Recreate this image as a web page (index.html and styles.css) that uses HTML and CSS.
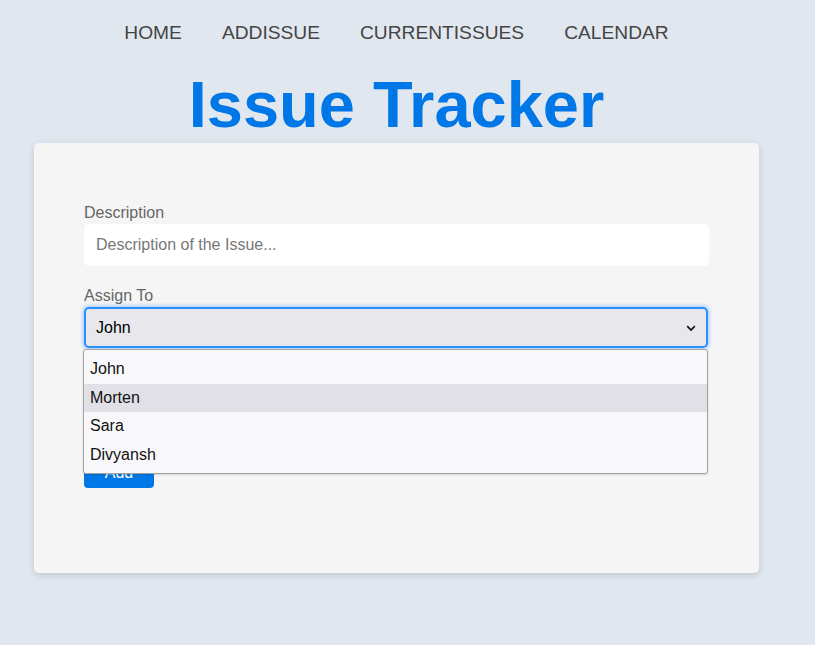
FILE: index.html
```html
<!DOCTYPE html>
<html lang="en">
<head>
<meta charset="utf-8">
<title>Issue Tracker</title>
<link rel="stylesheet" href="styles.css">
</head>
<body>
<div class="page">
  <nav class="nav">
    <a class="nav-link" href="#">HOME</a>
    <a class="nav-link" href="#">ADDISSUE</a>
    <a class="nav-link" href="#">CURRENTISSUES</a>
    <a class="nav-link" href="#">CALENDAR</a>
  </nav>
  <h1 class="title">Issue Tracker</h1>
  <div class="card">
    <form class="form">
      <label class="label">Description</label>
      <div class="input">Description of the Issue...</div>
      <label class="label label-assign">Assign To</label>
      <div class="select-wrap">
        <div class="select">
          <span>John</span>
          <svg class="chev" width="10" height="7" viewBox="0 0 10 7"><path d="M1.2 1.2 L5 5 L8.8 1.2" fill="none" stroke="#111" stroke-width="1.7"/></svg>
        </div>
        <ul class="dropdown">
          <li class="opt">John</li>
          <li class="opt opt-hover">Morten</li>
          <li class="opt">Sara</li>
          <li class="opt">Divyansh</li>
        </ul>
      </div>
      <button class="btn" type="button">Add</button>
    </form>
  </div>
</div>
</body>
</html>
```
FILE: styles.css
```css
html, body {
  margin: 0;
  padding: 0;
}
body {
  background: #e1e7ef;
  font-family: "Liberation Sans", Arial, sans-serif;
  width: 815px;
  height: 645px;
  overflow: hidden;
}
.page {
  width: 793px;
  display: flex;
  flex-direction: column;
  align-items: center;
}
.nav {
  display: flex;
  justify-content: center;
  padding: 22px 0 24px;
}
.nav-link {
  color: #444;
  text-decoration: none;
  font-size: 19.2px;
  line-height: 22px;
  padding: 0 20px;
}
.title {
  margin: 0;
  font-size: 65px;
  line-height: 74px;
  font-weight: bold;
  color: #0077e6;
}
.card {
  box-sizing: border-box;
  width: 725px;
  margin-top: 1px;
  background: #f5f5f5;
  border-radius: 5px;
  box-shadow: 0 2px 6px rgba(60, 70, 90, 0.2);
  padding: 61px 50px 85px;
}
.form {
  display: flex;
  flex-direction: column;
  align-items: flex-start;
}
.label {
  font-size: 16px;
  line-height: 18px;
  color: #666;
  margin-bottom: 2px;
}
.label-assign {
  margin-top: 21px;
  margin-bottom: 2px;
}
.input {
  box-sizing: border-box;
  width: 625px;
  height: 42px;
  background: #fff;
  border-radius: 5px;
  padding: 0 12px;
  display: flex;
  align-items: center;
  font-size: 16px;
  color: #777;
}
.select-wrap {
  position: relative;
  width: 625px;
}
.select {
  box-sizing: border-box;
  width: 624px;
  height: 41px;
  background: #e8e8ec;
  border: 2px solid #2b8fff;
  border-radius: 5px;
  box-shadow: 0 0 4px 1px rgba(43, 143, 255, 0.45);
  padding: 0 10px 0 10px;
  display: flex;
  align-items: center;
  justify-content: space-between;
  font-size: 16px;
  color: #000;
}
.chev {
  display: block;
  margin-top: 1px;
}
.dropdown {
  position: absolute;
  left: -1px;
  top: 42px;
  box-sizing: border-box;
  width: 625px;
  margin: 0;
  padding: 5px 0 4px;
  list-style: none;
  background: #f8f8fa;
  border: 1px solid #a3a3a3;
  border-radius: 3px;
  box-shadow: 0 1px 2px rgba(0, 0, 0, 0.15);
  z-index: 2;
}
.opt {
  height: 28.5px;
  line-height: 28.5px;
  padding: 0 6px;
  font-size: 16px;
  color: #111;
}
.opt-hover {
  background: #e1e0e6;
}
.btn {
  margin-top: 108px;
  width: 70px;
  height: 32px;
  border: none;
  border-radius: 4px;
  background: #0077e6;
  color: #fff;
  font-family: "Liberation Sans", Arial, sans-serif;
  font-size: 16px;
  padding: 1px 0 0;
}
```
